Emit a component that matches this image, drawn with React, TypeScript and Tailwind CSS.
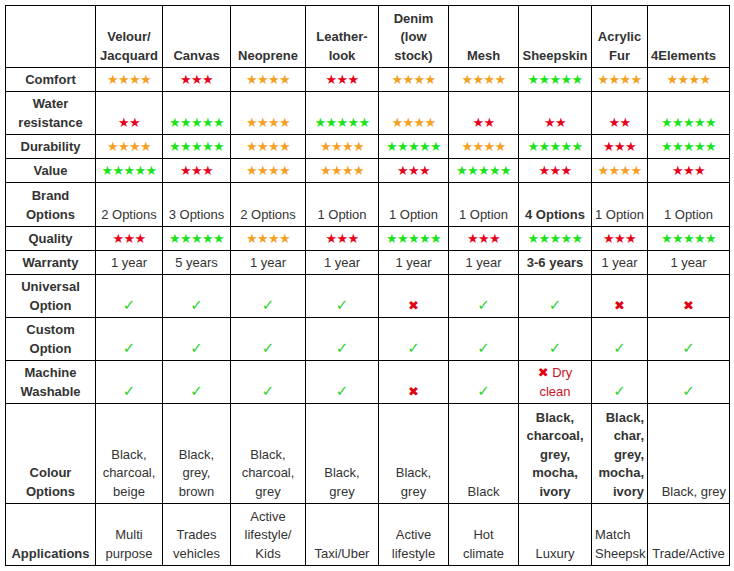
import React from 'react';

type Tone = 'o' | 'r' | 'g';

const starTone: Record<Tone, string> = {
  o: 'text-[#f5a01e]',
  r: 'text-[#e6001a]',
  g: 'text-[#1be31b]',
};

const Stars = ({ tone, n }: { tone: Tone; n: number }) => (
  <span className={`${starTone[tone]} font-['DejaVu_Sans',sans-serif] text-[13px] tracking-[-0.7px]`}>
    {'★'.repeat(n)}
  </span>
);

const Yes = () => <span className="text-[#2fd12f] font-['DejaVu_Sans',sans-serif] text-[15px]">✓</span>;
const No = () => <span className="text-[#e00010] font-['DejaVu_Sans',sans-serif] text-[13px]">✖</span>;

type Cell = {
  content: React.ReactNode;
  align?: 'left' | 'right';
  bold?: boolean;
};

const s = (tone: Tone, n: number): Cell => ({ content: <Stars tone={tone} n={n} /> });
const t = (text: React.ReactNode, bold = false): Cell => ({ content: text, bold });
const y: Cell = { content: <Yes /> };
const x: Cell = { content: <No /> };

const headers: Cell[] = [
  t(''),
  t(<>Velour/<br />Jacquard</>, true),
  t('Canvas', true),
  t('Neoprene', true),
  t(<>Leather-<br />look</>, true),
  t(<>Denim<br />(low<br />stock)</>, true),
  t('Mesh', true),
  t('Sheepskin', true),
  t(<>Acrylic<br />Fur</>, true),
  { content: '4Elements', bold: true, align: 'left' },
];

const rows: { label: React.ReactNode; cells: Cell[] }[] = [
  { label: 'Comfort', cells: [s('o', 4), s('r', 3), s('o', 4), s('r', 3), s('o', 4), s('o', 4), s('g', 5), s('o', 4), s('o', 4)] },
  { label: <>Water<br />resistance</>, cells: [s('r', 2), s('g', 5), s('o', 4), s('g', 5), s('o', 4), s('r', 2), s('r', 2), s('r', 2), s('g', 5)] },
  { label: 'Durability', cells: [s('o', 4), s('g', 5), s('o', 4), s('o', 4), s('g', 5), s('o', 4), s('g', 5), s('r', 3), s('g', 5)] },
  { label: 'Value', cells: [s('g', 5), s('r', 3), s('o', 4), s('o', 4), s('r', 3), s('g', 5), s('r', 3), s('o', 4), s('r', 3)] },
  {
    label: <>Brand<br />Options</>,
    cells: [t('2 Options'), t('3 Options'), t('2 Options'), t('1 Option'), t('1 Option'), t('1 Option'), t('4 Options', true), t('1 Option'), t('1 Option')],
  },
  { label: 'Quality', cells: [s('r', 3), s('g', 5), s('o', 4), s('r', 3), s('g', 5), s('r', 3), s('g', 5), s('r', 3), s('g', 5)] },
  {
    label: 'Warranty',
    cells: [t('1 year'), t('5 years'), t('1 year'), t('1 year'), t('1 year'), t('1 year'), t('3-6 years', true), t('1 year'), t('1 year')],
  },
  { label: <>Universal<br />Option</>, cells: [y, y, y, y, x, y, y, x, x] },
  { label: <>Custom<br />Option</>, cells: [y, y, y, y, y, y, y, y, y] },
  {
    label: <>Machine<br />Washable</>,
    cells: [
      y, y, y, y, x, y,
      { content: <span className="text-[#cc1122]"><No /> Dry<br />clean</span> },
      y, y,
    ],
  },
  {
    label: <>Colour<br />Options</>,
    cells: [
      t(<>Black,<br />charcoal,<br />beige</>),
      t(<>Black,<br />grey,<br />brown</>),
      t(<>Black,<br />charcoal,<br />grey</>),
      t(<>Black,<br />grey</>),
      t(<>Black,<br />grey</>),
      t('Black'),
      t(<>Black,<br />charcoal,<br />grey,<br />mocha,<br />ivory</>, true),
      { content: <>Black,<br />char,<br />grey,<br />mocha,<br />ivory</>, bold: true, align: 'right' },
      { content: 'Black, grey', align: 'right' },
    ],
  },
  {
    label: 'Applications',
    cells: [
      t(<>Multi<br />purpose</>),
      t(<>Trades<br />vehicles</>),
      t(<>Active<br />lifestyle/<br />Kids</>),
      t('Taxi/Uber'),
      t(<>Active<br />lifestyle</>),
      t(<>Hot<br />climate</>),
      t('Luxury'),
      { content: <>Match<br />Sheepsk</>, align: 'left' },
      t('Trade/Active'),
    ],
  },
];

const CellBox = ({ cell }: { cell: Cell }) => {
  const align =
    cell.align === 'left' ? 'text-left pl-[3px]' : cell.align === 'right' ? 'text-right pr-[3px]' : 'text-center px-[1px]';
  return (
    <div
      className={`bg-white flex flex-col justify-end pb-[2px] overflow-hidden whitespace-nowrap ${align} ${
        cell.bold ? 'font-bold' : ''
      }`}
    >
      <div>{cell.content}</div>
    </div>
  );
};

export default function App() {
  return (
    <div className="bg-white w-[734px] h-[571px] p-[5px] font-['Liberation_Sans',Arial,sans-serif] text-[13px] leading-[18.5px] text-[#333]">
      <div className="inline-grid bg-black p-px gap-px grid-cols-[89px_66px_67px_74px_72px_69px_69px_72px_55px_81px] grid-rows-[61px_23px_42px_23px_23px_43px_23px_23px_42px_42px_42px_99px_61px]">
        {headers.map((h, i) => (
          <CellBox key={`h${i}`} cell={h} />
        ))}
        {rows.map((row, ri) => (
          <React.Fragment key={ri}>
            <CellBox cell={{ content: row.label, bold: true }} />
            {row.cells.map((c, ci) => (
              <CellBox key={ci} cell={c} />
            ))}
          </React.Fragment>
        ))}
      </div>
    </div>
  );
}
